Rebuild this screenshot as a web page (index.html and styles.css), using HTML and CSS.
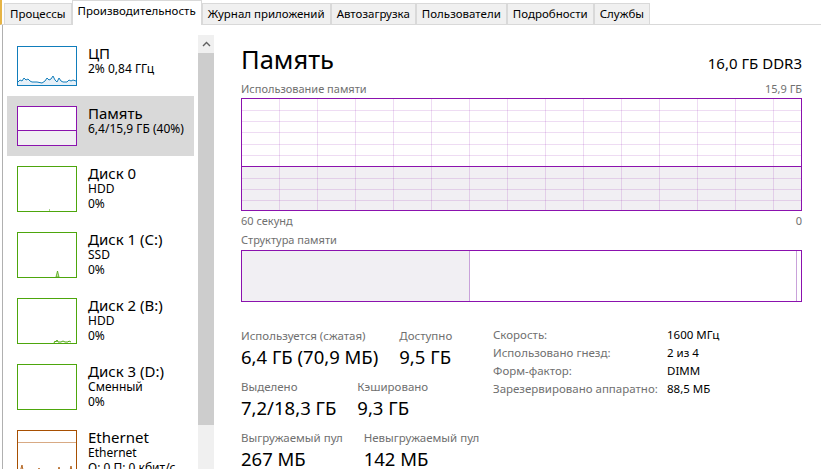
FILE: index.html
```html
<!DOCTYPE html>
<html lang="ru">
<head>
  <meta charset="UTF-8" />
  <title>Диспетчер задач — Производительность</title>
  <link rel="stylesheet" href="styles.css">
</head>
<body>
<div class="window">

  <div class="tabs">
    <div class="tab">Процессы</div>
    <div class="tab active">Производительность</div>
    <div class="tab">Журнал приложений</div>
    <div class="tab">Автозагрузка</div>
    <div class="tab">Пользователи</div>
    <div class="tab">Подробности</div>
    <div class="tab">Службы</div>
  </div>

  <div class="content">
    <aside class="sidebar">
      <div class="list">
        <div class="item">
          <svg class="thumb" width="60" height="40" viewBox="0 0 60 40">
            <polygon fill="#e6f0f8" points="1,39 1,36 3,34 5,35 7,32 9,34 11,33 13,35 15,36 20,36 25,37 28,35 30,32 32,34 34,33 36,30 38,34 40,36 42,32 44,35 46,36 50,36 52,34 54,35 56,34 59,35 59,39"/>
            <polyline fill="none" stroke="#117dbb" stroke-width="1" points="1,36 3,34 5,35 7,32 9,34 11,33 13,35 15,36 20,36 25,37 28,35 30,32 32,34 34,33 36,30 38,34 40,36 42,32 44,35 46,36 50,36 52,34 54,35 56,34 59,35"/>
            <rect x="0.5" y="0.5" width="59" height="39" fill="none" stroke="#117dbb"/>
          </svg>
          <div class="info">
            <div class="name">ЦП</div>
            <div class="sub">2% 0,84 ГГц</div>
          </div>
        </div>

        <div class="item selected">
          <svg class="thumb" width="60" height="40" viewBox="0 0 60 40">
            <rect x="0" y="0" width="60" height="40" fill="#fff"/>
            <rect x="1" y="24" width="58" height="15" fill="#f1eff3"/>
            <line x1="1" y1="24.5" x2="59" y2="24.5" stroke="#8b12ae"/>
            <rect x="0.5" y="0.5" width="59" height="39" fill="none" stroke="#8b12ae"/>
          </svg>
          <div class="info">
            <div class="name">Память</div>
            <div class="sub">6,4/15,9 ГБ (40%)</div>
          </div>
        </div>

        <div class="item tall">
          <svg class="thumb" width="60" height="46" viewBox="0 0 60 46">
            <line x1="32" y1="44" x2="33" y2="44" stroke="#4da60c"/>
            <rect x="0.5" y="0.5" width="59" height="45" fill="none" stroke="#4da60c"/>
          </svg>
          <div class="info">
            <div class="name">Диск 0</div>
            <div class="sub">HDD</div>
            <div class="sub">0%</div>
          </div>
        </div>

        <div class="item tall">
          <svg class="thumb" width="60" height="46" viewBox="0 0 60 46">
            <polygon fill="#c9e6b2" stroke="#4da60c" stroke-width="0.8" points="39,45 40.5,39 42,45"/>
            <rect x="0.5" y="0.5" width="59" height="45" fill="none" stroke="#4da60c"/>
          </svg>
          <div class="info">
            <div class="name">Диск 1 (C:)</div>
            <div class="sub">SSD</div>
            <div class="sub">0%</div>
          </div>
        </div>

        <div class="item tall">
          <svg class="thumb" width="60" height="46" viewBox="0 0 60 46">
            <polyline fill="none" stroke="#4da60c" points="37,45 38,43 39,44 40,42 41,44 44,44 46,43 48,44 51,44 52,43 54,44"/>
            <rect x="0.5" y="0.5" width="59" height="45" fill="none" stroke="#4da60c"/>
          </svg>
          <div class="info">
            <div class="name">Диск 2 (B:)</div>
            <div class="sub">HDD</div>
            <div class="sub">0%</div>
          </div>
        </div>

        <div class="item tall">
          <svg class="thumb" width="60" height="46" viewBox="0 0 60 46">
            <rect x="0.5" y="0.5" width="59" height="45" fill="none" stroke="#4da60c"/>
          </svg>
          <div class="info">
            <div class="name">Диск 3 (D:)</div>
            <div class="sub">Сменный</div>
            <div class="sub">0%</div>
          </div>
        </div>

        <div class="item tall">
          <svg class="thumb" width="60" height="46" viewBox="0 0 60 46">
            <line x1="1" y1="12.5" x2="59" y2="12.5" stroke="#d8aa84"/>
            <polygon fill="#e7c7ad" stroke="#a74f01" stroke-width="0.8" points="2,45 5,35 7,45 9,40 11,45 20,45 22,38 24,45 40,45 42,37 44,45 52,45 54,36 56,45"/>
            <rect x="0.5" y="0.5" width="59" height="45" fill="none" stroke="#a74f01"/>
          </svg>
          <div class="info">
            <div class="name">Ethernet</div>
            <div class="sub">Ethernet</div>
            <div class="sub">О: 0 П: 0 кбит/с</div>
          </div>
        </div>
      </div>

      <div class="scrollbar">
        <div class="sb-arrow">
          <svg width="9" height="6" viewBox="0 0 9 6">
            <polyline points="1,5 4.5,1.5 8,5" fill="none" stroke="#606060" stroke-width="1.4"/>
          </svg>
        </div>
        <div class="sb-thumb"></div>
      </div>
    </aside>

    <main class="main">
      <div class="header">
        <h1>Память</h1>
        <div class="spec">16,0 ГБ DDR3</div>
      </div>

      <div class="caption">
        <span>Использование памяти</span>
        <span>15,9 ГБ</span>
      </div>
      <svg class="chart" width="561" height="113" viewBox="0 0 561 113" shape-rendering="crispEdges">
        <rect x="0" y="0" width="561" height="113" fill="#fff"/>
        <rect x="1" y="68" width="559" height="44" fill="#f1eff3"/>
        <g stroke="rgba(139,18,174,0.15)">
          <path d="M38.5 0V113M76.5 0V113M114.5 0V113M152.5 0V113M190.5 0V113M228.5 0V113M266.5 0V113M304.5 0V113M342.5 0V113M380.5 0V113M418.5 0V113M456.5 0V113M494.5 0V113M532.5 0V113"/>
          <path d="M0 12.5H561M0 23.5H561M0 34.5H561M0 46.5H561M0 57.5H561M0 80.5H561M0 91.5H561M0 102.5H561"/>
        </g>
        <line x1="0" y1="68.5" x2="561" y2="68.5" stroke="#8b12ae"/>
        <rect x="0.5" y="0.5" width="560" height="112" fill="none" stroke="#8b12ae"/>
      </svg>
      <div class="caption under">
        <span>60 секунд</span>
        <span>0</span>
      </div>

      <div class="caption struct-title">
        <span>Структура памяти</span>
      </div>
      <svg class="structure" width="561" height="52" viewBox="0 0 561 52" shape-rendering="crispEdges">
        <rect x="0" y="0" width="561" height="52" fill="#fff"/>
        <rect x="1" y="1" width="227" height="50" fill="#f1eff3"/>
        <line x1="228.5" y1="1" x2="228.5" y2="51" stroke="#c9a2da"/>
        <line x1="555.5" y1="1" x2="555.5" y2="51" stroke="#c9a2da"/>
        <rect x="0.5" y="0.5" width="560" height="51" fill="none" stroke="#8b12ae"/>
      </svg>

      <div class="stats">
        <div class="stats-left">
          <div class="stat-row">
            <div class="stat">
              <div class="stat-label">Используется (сжатая)</div>
              <div class="stat-value">6,4 ГБ (70,9 МБ)</div>
            </div>
            <div class="stat">
              <div class="stat-label">Доступно</div>
              <div class="stat-value">9,5 ГБ</div>
            </div>
          </div>
          <div class="stat-row">
            <div class="stat">
              <div class="stat-label">Выделено</div>
              <div class="stat-value">7,2/18,3 ГБ</div>
            </div>
            <div class="stat">
              <div class="stat-label">Кэшировано</div>
              <div class="stat-value">9,3 ГБ</div>
            </div>
          </div>
          <div class="stat-row">
            <div class="stat">
              <div class="stat-label">Выгружаемый пул</div>
              <div class="stat-value">267 МБ</div>
            </div>
            <div class="stat">
              <div class="stat-label">Невыгружаемый пул</div>
              <div class="stat-value">142 МБ</div>
            </div>
          </div>
        </div>

        <div class="props">
          <div class="prop-name">Скорость:</div><div class="prop-value">1600 МГц</div>
          <div class="prop-name">Использовано гнезд:</div><div class="prop-value">2 из 4</div>
          <div class="prop-name">Форм-фактор:</div><div class="prop-value">DIMM</div>
          <div class="prop-name">Зарезервировано аппаратно:</div><div class="prop-value">88,5 МБ</div>
        </div>
      </div>
    </main>
  </div>
</div>
</body>
</html>
```

FILE: styles.css
```css
body {
  margin: 0;
  font-family: "Noto Sans", sans-serif;
  background: #fff;
  color: #000;
}

.window {
  width: 821px;
  height: 469px;
  overflow: hidden;
}

/* tab strip */
.tabs {
  display: flex;
  align-items: flex-end;
  height: 24px;
  padding-left: 2px;
  border-left: 2px solid #e6b445;
  border-bottom: 1px solid #d9d9d9;
  font-size: 11.5px;
}

.tab {
  height: 20px;
  line-height: 20px;
  padding: 0 5px;
  border: 1px solid #d9d9d9;
  border-bottom: none;
  background: #f0f0f0;
  white-space: nowrap;
}

.tab.active {
  height: 24px;
  line-height: 20px;
  margin-bottom: -1px;
  background: #fff;
}

.content {
  display: flex;
  height: 444px;
}

/* left list */
.sidebar {
  display: flex;
  width: 211px;
  margin-left: 2px;
  border-left: 1px solid #b0b0b0;
  padding-right: 1px;
}

.list {
  width: 187px;
  padding: 11px 4px 0 4px;
}

.item {
  display: flex;
  gap: 11px;
  height: 40px;
  padding: 10px 0 10px 10px;
}

.item.tall {
  height: 46px;
}

.item.selected {
  background: #d9d9d9;
}

.thumb {
  flex: none;
  display: block;
}

.name {
  font-size: 15px;
  line-height: 16px;
  margin-top: -1px;
  white-space: nowrap;
}

.sub {
  font-size: 12px;
  line-height: 15px;
  white-space: nowrap;
}

.scrollbar {
  width: 16px;
  margin-top: 10px;
  background: #f0f0f0;
}

.sb-arrow {
  display: flex;
  align-items: center;
  justify-content: center;
  height: 17px;
}

.sb-thumb {
  height: 372px;
  margin-top: 1px;
  background: #cdcdcd;
}

/* main pane */
.main {
  flex: 1;
  padding: 17px 19px 0 26px;
}

.header {
  display: flex;
  justify-content: space-between;
  align-items: baseline;
}

h1 {
  margin: 0;
  font-size: 25.5px;
  font-weight: normal;
  line-height: 34px;
}

.spec {
  font-size: 15px;
}

.caption {
  display: flex;
  justify-content: space-between;
  font-size: 11px;
  line-height: 15px;
  color: #707070;
  margin-top: 5px;
  margin-bottom: 2px;
}

.caption.under {
  margin-top: 2px;
  margin-bottom: 0;
}

.caption.struct-title {
  margin-top: 4px;
  margin-bottom: 3px;
}

.chart,
.structure {
  display: block;
}

.stats {
  display: flex;
  margin-top: 26px;
}

.stats-left {
  width: 252px;
}

.stat-row {
  display: flex;
  gap: 21px;
  margin-bottom: 10px;
}

.stat-label {
  font-size: 11.5px;
  line-height: 15px;
  color: #707070;
  white-space: nowrap;
}

.stat-value {
  font-size: 18.5px;
  line-height: 24px;
  margin-top: 2px;
  white-space: nowrap;
}

.props {
  display: grid;
  grid-template-columns: 174px auto;
  grid-auto-rows: 18px;
  font-size: 11.5px;
  line-height: 18px;
  margin-top: -2px;
}

.prop-name {
  color: #707070;
  white-space: nowrap;
}
```
